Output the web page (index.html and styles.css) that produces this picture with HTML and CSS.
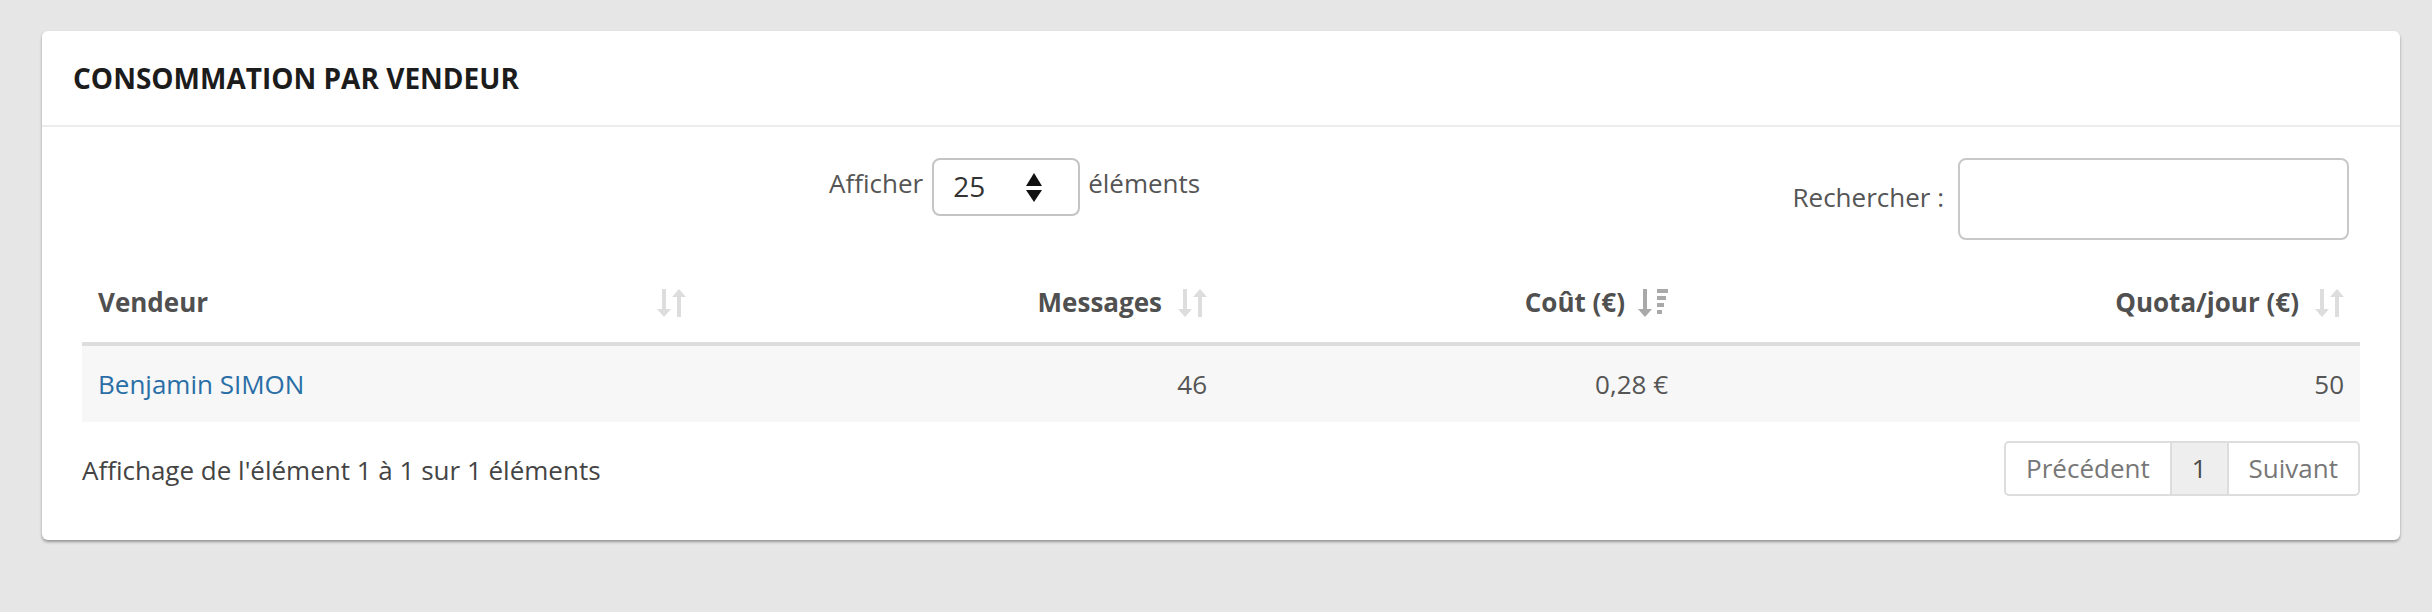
FILE: index.html
```html
<!DOCTYPE html>
<html lang="fr">
<head>
<meta charset="utf-8">
<title>Consommation par vendeur</title>
<link rel="stylesheet" href="styles.css">
</head>
<body>
<section class="card">
  <header class="card-header">
    <h2 class="card-title">CONSOMMATION PAR VENDEUR</h2>
  </header>
  <div class="card-body">
    <div class="controls">
      <div class="length">
        <span class="length-label">Afficher</span>
        <div class="select">
          <span class="select-value">25</span>
          <svg class="select-arrows" width="16" height="30" viewBox="0 0 16 30"><path d="M0 13 L16 13 L8 0 Z" fill="#111"/><path d="M0 17 L16 17 L8 29 Z" fill="#111"/></svg>
        </div>
        <span class="length-label">éléments</span>
      </div>
      <div class="filter">
        <span class="filter-label">Rechercher :</span>
        <input class="filter-input" type="search" aria-label="Rechercher">
      </div>
    </div>

    <table class="table">
      <colgroup>
        <col class="c-vendeur">
        <col class="c-messages">
        <col class="c-cout">
        <col class="c-quota">
      </colgroup>
      <thead>
        <tr>
          <th><div class="th-in th-left"><span>Vendeur</span>
            <svg class="sort" width="29" height="28" viewBox="0 0 29 28"><path d="M5 0 H9 V20 H14 L7 28 L0 20 H5 Z" fill="#dddddd"/><path d="M20 28 H24 V8 H29 L22 0 L15 8 H20 Z" fill="#dddddd"/></svg></div></th>
          <th><div class="th-in"><span>Messages</span>
            <svg class="sort" width="29" height="28" viewBox="0 0 29 28"><path d="M5 0 H9 V20 H14 L7 28 L0 20 H5 Z" fill="#dddddd"/><path d="M20 28 H24 V8 H29 L22 0 L15 8 H20 Z" fill="#dddddd"/></svg></div></th>
          <th><div class="th-in th-sorted"><span>Coût (€)</span>
            <svg class="sort" width="30" height="28" viewBox="0 0 30 28"><path d="M5 0 H9 V20 H14 L7 28 L0 20 H5 Z" fill="#a9a9a9"/><rect x="19" y="0" width="11" height="4" fill="#a9a9a9"/><rect x="19" y="7" width="9" height="4" fill="#a9a9a9"/><rect x="19" y="14" width="7" height="4" fill="#a9a9a9"/><rect x="19" y="21" width="5" height="4" fill="#a9a9a9"/></svg></div></th>
          <th><div class="th-in"><span>Quota/jour (€)</span>
            <svg class="sort" width="29" height="28" viewBox="0 0 29 28"><path d="M5 0 H9 V20 H14 L7 28 L0 20 H5 Z" fill="#dddddd"/><path d="M20 28 H24 V8 H29 L22 0 L15 8 H20 Z" fill="#dddddd"/></svg></div></th>
        </tr>
      </thead>
      <tbody>
        <tr class="odd">
          <td><a class="link" href="#">Benjamin SIMON</a></td>
          <td class="num">46</td>
          <td class="num">0,28 €</td>
          <td class="num">50</td>
        </tr>
      </tbody>
    </table>

    <div class="footer">
      <div class="info">Affichage de l'élément 1 à 1 sur 1 éléments</div>
      <ul class="pagination">
        <li class="page disabled">Précédent</li>
        <li class="page active">1</li>
        <li class="page disabled">Suivant</li>
      </ul>
    </div>
  </div>
</section>
</body>
</html>
```
FILE: styles.css
```css
html, body {
  margin: 0;
  padding: 0;
}
body {
  background: #e6e6e6;
  font-family: "Open Sans", "Noto Sans", "Liberation Sans", sans-serif;
  font-size: 26px;
  color: #555555;
  padding: 31px 32px 72px 42px;
}
.card {
  width: 2358px;
  background: #ffffff;
  border-radius: 6px;
  box-shadow: 0 2px 3px rgba(0, 0, 0, 0.35);
}
.card-header {
  padding: 27px 31px;
  border-bottom: 2px solid #ececec;
}
.card-title {
  margin: 0;
  font-size: 28px;
  font-weight: 700;
  line-height: 40px;
  color: #1c1c1c;
}
.card-body {
  padding: 31px 40px 44px 40px;
}
.controls {
  display: flex;
  justify-content: space-between;
  align-items: flex-start;
  height: 82px;
}
.length {
  display: flex;
  align-items: flex-start;
  margin-left: 747px;
}
.length-label {
  line-height: 38px;
  margin-top: 6px;
}
.select {
  box-sizing: border-box;
  width: 148px;
  height: 58px;
  margin: 0 8px 0 9px;
  border: 2px solid #c4c4c4;
  border-radius: 8px;
  display: flex;
  align-items: flex-start;
  padding: 0 0 0 19px;
  color: #333333;
}
.select-value {
  font-size: 28px;
  line-height: 38px;
  margin-top: 7px;
  width: 73px;
}
.select-arrows {
  margin-top: 13px;
}
.filter {
  display: flex;
  align-items: flex-start;
  gap: 14px;
  margin-right: 11px;
}
.filter-label {
  line-height: 38px;
  margin-top: 20px;
}
.filter-input {
  box-sizing: border-box;
  width: 391px;
  height: 82px;
  border: 2px solid #c8c8c8;
  border-radius: 8px;
  margin: 0;
  padding: 0 16px;
  font: inherit;
  background: #fff;
}
.table {
  width: 100%;
  margin-top: 25px;
  border-collapse: collapse;
  table-layout: fixed;
}
.c-vendeur { width: 620px; }
.c-messages { width: 521px; }
.c-cout { width: 461px; }
.c-quota { width: 676px; }
.table th {
  padding: 19px 16px 21px 16px;
  line-height: 37px;
  font-weight: 700;
  color: #505050;
  border-bottom: 4px solid #dddddd;
  text-align: right;
}
.th-in {
  display: flex;
  justify-content: flex-end;
  align-items: center;
  gap: 16px;
}
.th-left {
  justify-content: space-between;
}
.th-sorted {
  gap: 13px;
}
.sort {
  flex: none;
}
.table td {
  padding: 20px 16px 19px 16px;
  line-height: 37px;
  background: #f7f7f7;
}
.table td.num {
  text-align: right;
}
.link {
  color: #2a6ea6;
  text-decoration: none;
}
.footer {
  display: flex;
  justify-content: space-between;
  align-items: flex-start;
  margin-top: 19px;
}
.info {
  line-height: 37px;
  margin-top: 11px;
  color: #444444;
}
.pagination {
  display: flex;
  list-style: none;
  margin: 0;
  padding: 0;
}
.page {
  font-size: 26px;
  line-height: 35px;
  padding: 8px 20px;
  border: 2px solid #dddddd;
  margin-left: -2px;
  background: #ffffff;
  color: #777777;
}
.page:first-child {
  margin-left: 0;
  border-radius: 5px 0 0 5px;
}
.page:last-child {
  border-radius: 0 5px 5px 0;
}
.page.active {
  background: #eeeeee;
  color: #4a4a4a;
}
```
